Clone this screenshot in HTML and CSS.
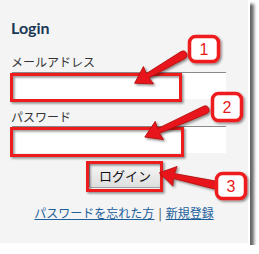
FILE: index.html
```html
<!DOCTYPE html>
<html lang="ja">
<head>
    <meta charset="UTF-8">
    <meta name="viewport" content="width=device-width, initial-scale=1.0">
    <title>Login</title>
    <link rel="stylesheet" href="styles.css">
</head>
<body>
    <div class="panel">
        <h1 class="title">Login</h1>

        <label class="label" for="email">メールアドレス</label>
        <input class="field" type="text" id="email">

        <label class="label label-pass" for="password">パスワード</label>
        <input class="field field-pass" type="password" id="password">

        <div class="actions">
            <button class="btn">ログイン</button>
        </div>

        <p class="links">
            <a href="#">パスワードを忘れた方</a><span class="sep">|</span><a href="#">新規登録</a>
        </p>

        <!-- annotation layer drawn over the form -->
        <svg class="notes" width="259" height="254" viewBox="0 0 259 254">
            <defs>
                <filter id="shade" x="-30%" y="-30%" width="160%" height="160%">
                    <feDropShadow dx="1.5" dy="1.5" stdDeviation="1.2" flood-color="#000" flood-opacity="0.45"/>
                </filter>
            </defs>

            <g class="mark" filter="url(#shade)">
                <rect x="11.5" y="74.5" width="169" height="26"/>
                <rect x="11.5" y="128.5" width="171" height="27"/>
                <rect x="87.5" y="162.5" width="74" height="28"/>
            </g>

            <g class="arrow" filter="url(#shade)">
                <path transform="translate(183 55) rotate(149.7)" d="M0 -4 L41 -2.5 L40 -10 L56 0 L40 10 L41 2.5 L0 4 A4 4 0 0 1 0 -4 Z"/>
                <path transform="translate(205 110) rotate(155.8)" d="M0 -4 L51 -2.5 L50 -10 L66 0 L50 10 L51 2.5 L0 4 A4 4 0 0 1 0 -4 Z"/>
                <path transform="translate(215 185) rotate(192.3)" d="M0 -4 L42 -2.5 L41 -10 L57 0 L41 10 L42 2.5 L0 4 A4 4 0 0 1 0 -4 Z"/>
            </g>

            <g class="badge" filter="url(#shade)">
                <rect x="189.5" y="36.5" width="29" height="25" rx="6"/>
                <rect x="212.5" y="93.5" width="29" height="27" rx="6"/>
                <rect x="216.5" y="173.5" width="29" height="25" rx="6"/>
            </g>
            <g class="badge-num">
                <text x="204" y="55">1</text>
                <text x="227" y="113">2</text>
                <text x="231" y="192">3</text>
            </g>
        </svg>
    </div>
</body>
</html>
```

FILE: styles.css
```css
body {
    margin: 0;
    background-color: #ffffff;
    font-family: "Noto Sans CJK JP", "Noto Sans", sans-serif;
}
.panel {
    position: relative;
    box-sizing: border-box;
    width: 250px;
    height: 245px;
    padding: 19px 0 0 11px;
    background-color: #f4f4f4;
    border: 2px solid #ffffff;
    border-left: 0;
    border-top: 0;
    box-shadow: 4px 4px 3px rgba(0, 0, 0, 0.6);
    display: flex;
    flex-direction: column;
}
.title {
    margin: 0;
    font-family: Lato, "Open Sans", sans-serif;
    font-weight: bold;
    font-size: 16px;
    line-height: 18px;
    color: #1b3856;
}
.label {
    margin-top: 17px;
    font-size: 12px;
    line-height: 16px;
    color: #333333;
}
.label-pass {
    margin-top: 10px;
}
.field {
    box-sizing: border-box;
    width: 214px;
    height: 27px;
    margin: 2px 0 0 1px;
    padding: 0 4px;
    background-color: #ffffff;
    border: none;
    border-top: 1px solid #8a8a8a;
    outline: none;
}
.field-pass {
    margin-top: 1px;
}
.actions {
    margin-top: 9px;
    padding-left: 78px;
}
.btn {
    box-sizing: border-box;
    width: 72px;
    height: 25px;
    padding: 0;
    font-family: "Noto Sans CJK JP", sans-serif;
    font-size: 13px;
    color: #111111;
    background: linear-gradient(#f6f6f6, #dedede);
    border: 1px solid #a0a0a0;
    border-radius: 2px;
}
.links {
    margin: 16px 0 0 0;
    padding-right: 11px;
    text-align: center;
    font-size: 12px;
    line-height: 18px;
    color: #1d5f9b;
}
.links a {
    color: #1d5f9b;
}
.sep {
    margin: 0 4px;
    color: #333333;
}
.notes {
    position: absolute;
    left: 0;
    top: 0;
    pointer-events: none;
}
.mark rect {
    fill: none;
    stroke: #ee1c1c;
    stroke-width: 3;
}
.arrow path {
    fill: #e8191b;
    stroke: #b50d0d;
    stroke-width: 0.8;
}
.badge rect {
    fill: #ffffff;
    stroke: #ee1c1c;
    stroke-width: 3.5;
}
.badge-num text {
    font-family: "Liberation Sans", Arial, sans-serif;
    font-size: 16px;
    fill: #e8191b;
    text-anchor: middle;
}
```
